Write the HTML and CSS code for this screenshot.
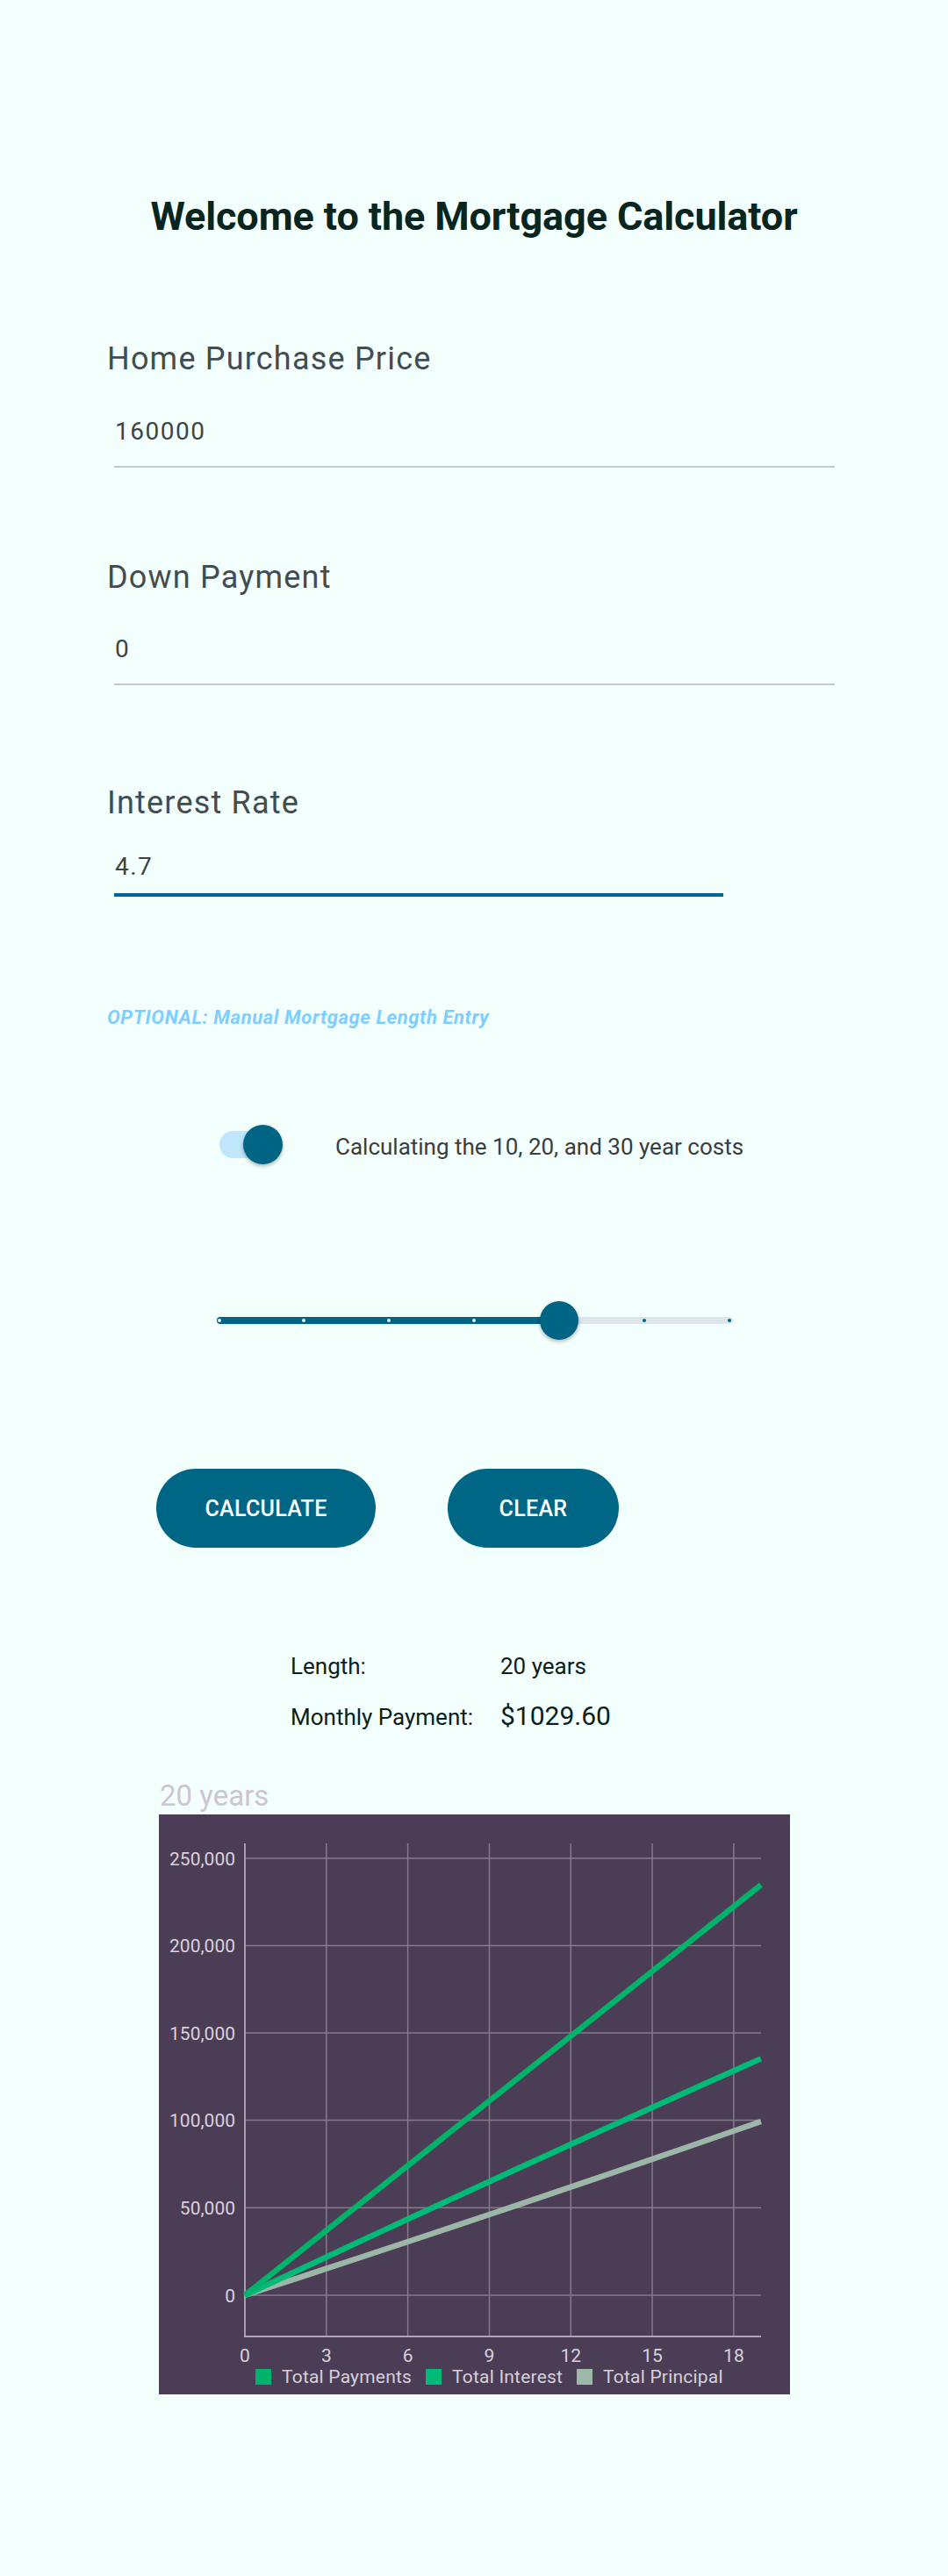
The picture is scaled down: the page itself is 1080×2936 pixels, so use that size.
FILE: index.html
```html
<!DOCTYPE html>
<html lang="en">
<head>
<meta charset="utf-8">
<title>Mortgage Calculator</title>
<link rel="stylesheet" href="styles.css">
</head>
<body>
<main class="page">
  <h1 class="title">Welcome to the Mortgage Calculator</h1>

  <section class="field field-price">
    <div class="field-label">Home Purchase Price</div>
    <div class="field-input">160000</div>
  </section>

  <section class="field field-down">
    <div class="field-label">Down Payment</div>
    <div class="field-input">0</div>
  </section>

  <section class="field field-rate">
    <div class="field-label">Interest Rate</div>
    <div class="field-input field-input-focused">4.7</div>
  </section>

  <p class="optional">OPTIONAL: Manual Mortgage Length Entry</p>

  <div class="toggle-row">
    <span class="switch">
      <span class="switch-track"></span>
      <span class="switch-thumb"></span>
    </span>
    <span class="toggle-text">Calculating the 10, 20, and 30 year costs</span>
  </div>

  <div class="slider">
    <div class="slider-track"></div>
    <div class="slider-fill"></div>
    <span class="tick tick-on t0"></span>
    <span class="tick tick-on t1"></span>
    <span class="tick tick-on t2"></span>
    <span class="tick tick-on t3"></span>
    <span class="tick tick-off t5"></span>
    <span class="tick tick-off t6"></span>
    <div class="slider-thumb"></div>
  </div>

  <div class="buttons">
    <button class="btn btn-calc">CALCULATE</button>
    <button class="btn btn-clear">CLEAR</button>
  </div>

  <div class="results">
    <div class="res-label">Length:</div>
    <div class="res-value">20 years</div>
    <div class="res-label res-row2">Monthly Payment:</div>
    <div class="res-value res-big res-row2">$1029.60</div>
  </div>

  <div class="chart-title">20 years</div>

  <div class="chart">
    <svg class="chart-svg" width="719" height="630" viewBox="0 0 719 630" xmlns="http://www.w3.org/2000/svg">
      <g class="grid" stroke="#857b8c" stroke-width="1.5">
        <line x1="98" y1="50" x2="686" y2="50"/>
        <line x1="98" y1="149.4" x2="686" y2="149.4"/>
        <line x1="98" y1="249" x2="686" y2="249"/>
        <line x1="98" y1="348.6" x2="686" y2="348.6"/>
        <line x1="98" y1="448.2" x2="686" y2="448.2"/>
        <line x1="98" y1="548" x2="686" y2="548"/>
        <line x1="190.8" y1="33" x2="190.8" y2="595"/>
        <line x1="283.6" y1="33" x2="283.6" y2="595"/>
        <line x1="376.5" y1="33" x2="376.5" y2="595"/>
        <line x1="469.3" y1="33" x2="469.3" y2="595"/>
        <line x1="562.1" y1="33" x2="562.1" y2="595"/>
        <line x1="654.9" y1="33" x2="654.9" y2="595"/>
      </g>
      <line x1="98" y1="33" x2="98" y2="596" stroke="#a69eac" stroke-width="2"/>
      <line x1="97" y1="595" x2="686" y2="595" stroke="#aea6b4" stroke-width="2"/>
      <g class="ylabels" font-family="Roboto, sans-serif" font-size="21" fill="#d9d2dc" text-anchor="end">
        <text x="87" y="57.5">250,000</text>
        <text x="87" y="157">200,000</text>
        <text x="87" y="256.5">150,000</text>
        <text x="87" y="356">100,000</text>
        <text x="87" y="455.5">50,000</text>
        <text x="87" y="555.5">0</text>
      </g>
      <g class="xlabels" font-family="Roboto, sans-serif" font-size="21" fill="#d9d2dc" text-anchor="middle">
        <text x="98" y="624">0</text>
        <text x="190.8" y="624">3</text>
        <text x="283.6" y="624">6</text>
        <text x="376.5" y="624">9</text>
        <text x="469.3" y="624">12</text>
        <text x="562.1" y="624">15</text>
        <text x="654.9" y="624">18</text>
      </g>
      <g fill="none" stroke-width="6.5" stroke-linejoin="round">
        <polyline stroke="#9cb7a7" points="98,548 128.94,537.93 159.88,527.83 190.82,517.68 221.76,507.5 252.7,497.27 283.64,487.01 314.58,476.71 345.52,466.36 376.46,455.98 407.4,445.56 438.34,435.1 469.28,424.61 500.22,414.07 531.16,403.49 562.1,392.87 593.04,382.22 623.98,371.53 654.92,360.79 685.86,350.02"/>
        <polyline stroke="#00bb77" points="98,548 128.94,533.46 159.88,518.95 190.82,504.48 221.76,490.05 252.7,475.67 283.64,461.32 314.58,447.01 345.52,432.74 376.46,418.51 407.4,404.32 438.34,390.17 469.28,376.05 500.22,361.98 531.16,347.94 562.1,333.95 593.04,319.99 623.98,306.07 654.92,292.2 685.86,278.36"/>
        <polyline stroke="#00b36b" points="98,548 685.86,80.4"/>
      </g>
    </svg>
    <div class="legend">
      <span class="legend-item"><span class="swatch swatch-pay"></span>Total Payments</span>
      <span class="legend-item"><span class="swatch swatch-int"></span>Total Interest</span>
      <span class="legend-item"><span class="swatch swatch-prin"></span>Total Principal</span>
    </div>
  </div>
</main>
</body>
</html>
```

FILE: styles.css
```css
* {
  box-sizing: border-box;
}

html, body {
  margin: 0;
  padding: 0;
  background: #f3fffc;
}

body {
  font-family: "Roboto", "Liberation Sans", sans-serif;
  width: 1080px;
  min-height: 2936px;
}

.page {
  padding-top: 220px;
  display: flex;
  flex-direction: column;
  align-items: flex-start;
}

.title {
  align-self: stretch;
  margin: 0;
  text-align: center;
  font-size: 45px;
  line-height: 54px;
  font-weight: 700;
  letter-spacing: -0.1px;
  color: #082520;
}

.field {
  margin-left: 122px;
}

.field-price { margin-top: 114px; }
.field-down { margin-top: 104px; }
.field-rate { margin-top: 113px; }

.field-label {
  font-size: 36px;
  line-height: 43px;
  letter-spacing: 1.2px;
  color: #434c50;
}

.field-input {
  margin-top: 44px;
  margin-left: 8px;
  width: 821px;
  font-size: 28px;
  line-height: 34px;
  letter-spacing: 1.5px;
  color: #3d4448;
  padding-left: 1px;
  padding-bottom: 22px;
  border-bottom: 2px solid #c6c6ce;
}

.field-down .field-input {
  margin-top: 43px;
}

.field-input-focused {
  margin-top: 34px;
  width: 694px;
  padding-bottom: 13px;
  border-bottom: 4px solid #00649a;
}

.optional {
  margin: 125px 0 0 122px;
  font-size: 22px;
  line-height: 26px;
  font-weight: 700;
  font-style: italic;
  letter-spacing: 0.6px;
  color: #7ecfff;
}

.toggle-row {
  margin: 109px 0 0 250px;
  height: 46px;
  display: flex;
  align-items: center;
  gap: 60px;
}

.switch {
  position: relative;
  display: block;
  width: 72px;
  height: 46px;
}

.switch-track {
  position: absolute;
  left: 0;
  top: 7px;
  width: 60px;
  height: 31px;
  border-radius: 16px;
  background: #c0e6fb;
}

.switch-thumb {
  position: absolute;
  left: 27px;
  top: 0;
  width: 45px;
  height: 45px;
  border-radius: 50%;
  background: #006485;
  box-shadow: 0 2px 4px rgba(0, 0, 0, 0.3);
}

.toggle-text {
  font-size: 26px;
  line-height: 30px;
  color: #3a3d3d;
  padding-top: 3px;
}

.slider {
  position: relative;
  margin: 155px 0 0 247px;
  width: 588px;
  height: 44px;
}

.slider-track {
  position: absolute;
  left: 0;
  right: 0;
  top: 18px;
  height: 8px;
  border-radius: 4px;
  background: #dde4ea;
}

.slider-fill {
  position: absolute;
  left: 0;
  top: 18px;
  width: 392px;
  height: 8px;
  border-radius: 4px 0 0 4px;
  background: #006485;
}

.tick {
  position: absolute;
  top: 20px;
  width: 4px;
  height: 4px;
  border-radius: 50%;
}

.tick-on { background: #e6f2f6; }
.tick-off { background: #006485; }

.t0 { left: 1px; }
.t1 { left: 97px; }
.t2 { left: 194px; }
.t3 { left: 291px; }
.t5 { left: 485px; }
.t6 { left: 582px; }

.slider-thumb {
  position: absolute;
  left: 368px;
  top: 0;
  width: 44px;
  height: 44px;
  border-radius: 50%;
  background: #006485;
  box-shadow: 0 2px 4px rgba(0, 0, 0, 0.3);
}

.buttons {
  margin: 147px 0 0 178px;
  display: flex;
  gap: 82px;
}

.btn {
  border: none;
  padding: 0;
  height: 90px;
  border-radius: 45px;
  background: #006685;
  color: #ffffff;
  font-family: "Roboto", "Liberation Sans", sans-serif;
  font-size: 25px;
  font-weight: 500;
  letter-spacing: 0.3px;
}

.btn-calc { width: 250px; }
.btn-clear { width: 195px; }

.results {
  margin: 120px 0 0 331px;
  display: grid;
  grid-template-columns: 239px auto;
  row-gap: 24px;
  align-items: baseline;
  color: #0c201c;
}

.res-label,
.res-value {
  font-size: 26px;
  line-height: 30px;
}

.res-row2 {
  line-height: 36px;
}

.res-big {
  font-size: 30px;
}

.chart-title {
  margin: 51px 0 0 182px;
  font-size: 33px;
  line-height: 41px;
  color: #cdc5d3;
}

.chart {
  margin: 1px 0 0 181px;
  width: 719px;
  height: 661px;
  background: #4a3d55;
}

.chart-svg {
  display: block;
}

.legend {
  margin: 0 0 0 110px;
  display: flex;
  align-items: center;
  gap: 16px;
  font-size: 21px;
  line-height: 22px;
  letter-spacing: 0.2px;
  color: #d6d0da;
}

.legend-item {
  display: flex;
  align-items: center;
  gap: 12px;
}

.swatch {
  display: block;
  width: 18px;
  height: 18px;
}

.swatch-pay { background: #00b36b; }
.swatch-int { background: #00bb77; }
.swatch-prin { background: #9cb8a9; }
```
